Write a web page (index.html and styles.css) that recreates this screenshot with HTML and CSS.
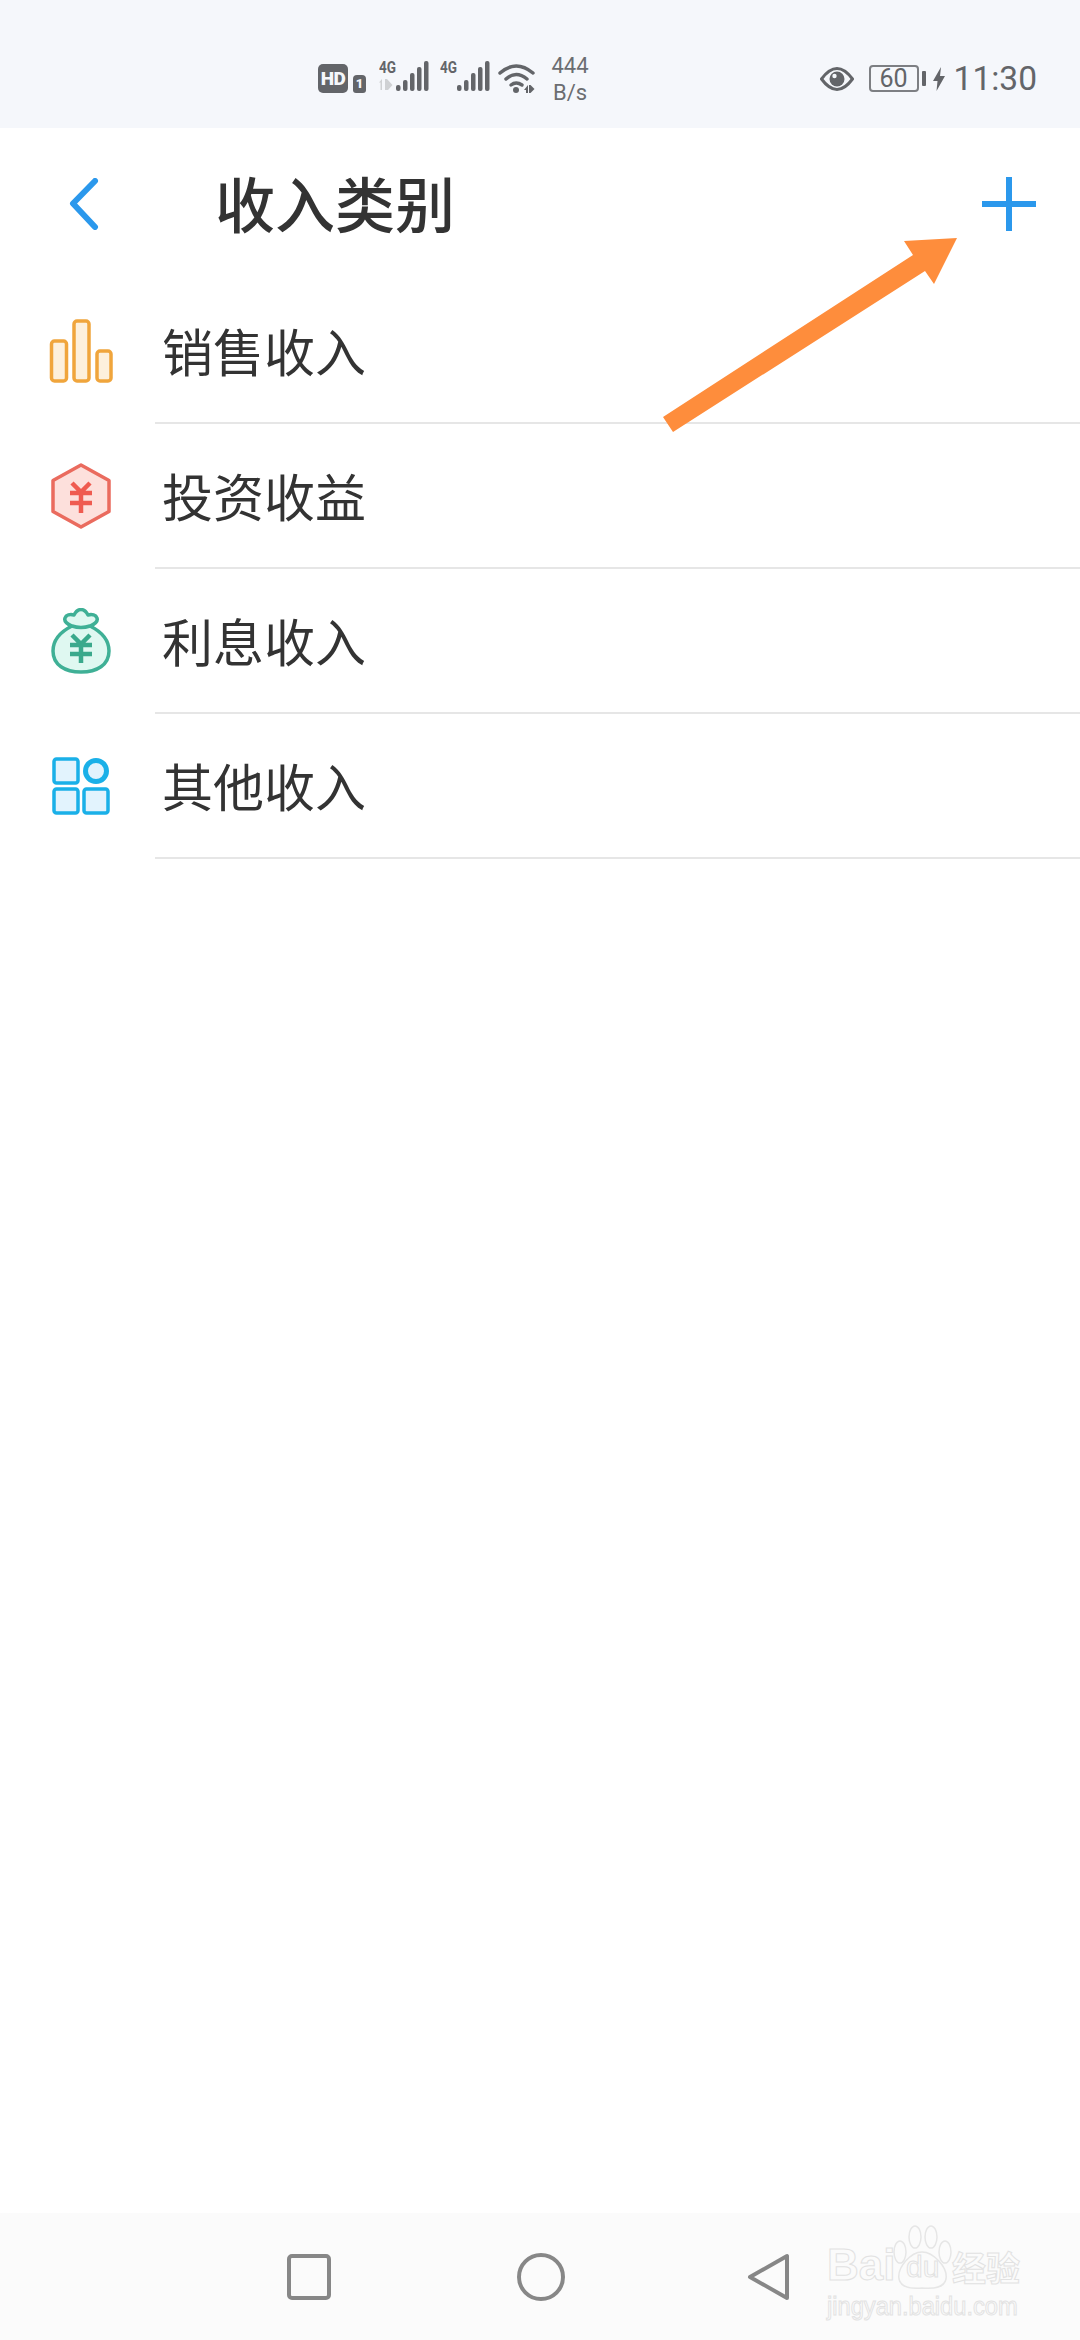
FILE: index.html
```html
<!DOCTYPE html>
<html lang="zh-CN">
<head>
<meta charset="utf-8">
<title>收入类别</title>
<link rel="stylesheet" href="styles.css">
</head>
<body>
<div class="page">
  <div class="statusbar">
    <div class="hd">HD</div>
    <div class="sim">1</div>
    <div class="signal sig1">
      <span class="g4">4G</span>
      <svg class="updown" width="14" height="11" viewBox="0 0 14 11"><path d="M0 3.500L3 0V11H1.500V3.500ZM6 11V0H8V4L8 0 13.500 6 9 11H7.500V11Z" fill="#cfd1d4"/></svg>
      <svg width="33" height="34" viewBox="0 0 33 34"><g fill="#636569"><rect x="0" y="25" width="4.500" height="6" rx="2"/><rect x="7" y="20" width="4.500" height="11" rx="2"/><rect x="14" y="13" width="4.500" height="18" rx="2"/><rect x="21" y="7" width="4.500" height="24" rx="2"/><rect x="28" y="1" width="4.500" height="30" rx="2"/></g></svg>
    </div>
    <div class="signal sig2">
      <span class="g4">4G</span>
      <svg width="33" height="34" viewBox="0 0 33 34"><g fill="#636569"><rect x="0" y="25" width="4.500" height="6" rx="2"/><rect x="7" y="20" width="4.500" height="11" rx="2"/><rect x="14" y="13" width="4.500" height="18" rx="2"/><rect x="21" y="7" width="4.500" height="24" rx="2"/><rect x="28" y="1" width="4.500" height="30" rx="2"/></g></svg>
    </div>
    <svg class="wifi" width="38" height="32" viewBox="0 0 38 32"><g fill="none" stroke="#636569" stroke-width="3.500" stroke-linecap="round"><path d="M2 11Q18-3 35 11"/><path d="M8 17Q18 8 29 17"/><path d="M13 23Q18 19 24 23"/></g><circle cx="18" cy="28" r="3" fill="#636569"/><path d="M28 31h2V23l-4 5h2zM31 23h1.500l4 4-4 4H31z" fill="#636569"/></svg>
    <div class="speed"><span>444</span><span>B/s</span></div>
    <div class="status-right">
      <svg width="34" height="28" viewBox="0 0 34 28"><path d="M1.500 14Q17-7 32.500 14Q17 35 1.500 14Z" fill="none" stroke="#636569" stroke-width="3"/><circle cx="17" cy="14" r="7.500" fill="#636569"/><circle cx="14.500" cy="11" r="2.200" fill="#f5f7fb"/></svg>
      <div class="battery">60</div>
      <div class="nub"></div>
      <svg class="bolt" width="12" height="24" viewBox="0 0 12 24"><path d="M8 0L0 14h4.500L3.500 24 12 9H7z" fill="#636569"/></svg>
      <div class="clock">11:30</div>
    </div>
  </div>

  <header class="header">
    <svg class="back" width="30" height="52" viewBox="0 0 30 52"><path d="M26 3L4 25.500 26 49" fill="none" stroke="#2b98ec" stroke-width="6" stroke-linecap="round" stroke-linejoin="round"/></svg>
    <h1 class="title">收入类别</h1>
    <svg class="plus" width="54" height="54" viewBox="0 0 54 54"><path d="M27 0V54M0 27H54" stroke="#2b98ec" stroke-width="6" stroke-linejoin="round"/></svg>
  </header>

  <main class="list">
    <div class="row">
      <div class="icon-cell">
        <svg width="64" height="64" viewBox="0 0 64 64"><g fill="#fdf0dc" stroke="#f0a53c" stroke-width="3.500"><rect x="2.500" y="22" width="15" height="40" rx="3"/><rect x="25" y="2" width="15" height="60" rx="3"/><rect x="48" y="32" width="14" height="30" rx="3"/></g></svg>
      </div>
      <div class="label">销售收入</div>
    </div>
    <div class="row">
      <div class="icon-cell">
        <svg width="60" height="66" viewBox="0 0 60 66"><path d="M30 2L58 17.500V48.500L30 64 2 48.500V17.500Z" fill="#fde0dc" stroke="#ea6b5e" stroke-width="3.500" stroke-linejoin="round"/><path d="M21 20L30 29 39 20M19 30H41M19 40H41M30 29V50" fill="none" stroke="#ef5b50" stroke-width="4.500"/></svg>
      </div>
      <div class="label">投资收益</div>
    </div>
    <div class="row">
      <div class="icon-cell">
        <svg width="60" height="66" viewBox="0 0 60 66"><path d="M21 18C9 24 2 33 2 43C2 57 14 64 30 64C46 64 58 57 58 43C58 33 51 24 39 18C44 16 47 13 46 10C45 7 41 6 37 7C35 3 33 1.500 30 1.500C27 1.500 25 3 23 7C19 6 15 7 14 10C13 13 16 16 21 18Z" fill="#dff8f1" stroke="#3fb096" stroke-width="3.500" stroke-linejoin="round"/><path d="M21 18Q30 21 39 18" fill="none" stroke="#3fb096" stroke-width="3.500"/><path d="M21 27L30 36 39 27M19 37H41M19 46H41M30 36V55" fill="none" stroke="#3aa98c" stroke-width="4.500"/></svg>
      </div>
      <div class="label">利息收入</div>
    </div>
    <div class="row">
      <div class="icon-cell">
        <svg width="58" height="58" viewBox="0 0 58 58"><g fill="#e2f3fd" stroke="#1ab0e8" stroke-width="3.500"><rect x="2" y="2" width="24" height="24" rx="2.500"/><circle cx="44" cy="14" r="10.500" stroke-width="5"/><rect x="2" y="32" width="24" height="24" rx="2.500"/><rect x="32" y="32" width="24" height="24" rx="2.500"/></g></svg>
      </div>
      <div class="label">其他收入</div>
    </div>
  </main>

  <nav class="navbar">
    <svg width="44" height="46" viewBox="0 0 44 46"><rect x="2" y="2" width="40" height="42" rx="3" fill="none" stroke="#878787" stroke-width="4"/></svg>
    <svg width="48" height="48" viewBox="0 0 48 48"><circle cx="24" cy="24" r="22" fill="none" stroke="#878787" stroke-width="4"/></svg>
    <svg class="nav-back" width="44" height="48" viewBox="0 0 44 48"><path d="M40 3V45L3 24Z" fill="none" stroke="#878787" stroke-width="4" stroke-linejoin="round"/></svg>
  </nav>

  <svg class="arrow" width="300" height="200" viewBox="0 0 300 200"><path d="M2 179L252 17 243 3 296 0 273 46 264 33 12 194Z" fill="#fe8d3c"/></svg>

  <div class="watermark">
    <div class="wm-top">
      <span>Bai</span>
      <svg class="paw" width="60" height="66" viewBox="0 0 60 66"><g fill="none" stroke="#e6e6e6" stroke-width="1.500"><ellipse cx="8" cy="27" rx="6" ry="11"/><ellipse cx="23" cy="12" rx="6" ry="11"/><ellipse cx="39" cy="12" rx="6" ry="11"/><ellipse cx="53" cy="27" rx="6" ry="11"/><path d="M30 27C19 27 5 42 7 54C9 63 19 64 30 63C42 64 52 63 54 54C56 42 41 27 30 27Z"/></g></svg>
      <span class="wm-du">du</span>
      <span class="wm-cn">经验</span>
    </div>
    <div class="wm-url">jingyan.baidu.com</div>
  </div>
</div>
</body>
</html>
```

FILE: styles.css
```css
* { box-sizing: border-box; }
html, body { margin: 0; padding: 0; }
body {
  width: 1080px;
  height: 2340px;
  background: #fff;
  font-family: "Noto Sans CJK SC", "Noto Sans", sans-serif;
  color: #333;
  overflow: hidden;
}
.page {
  position: relative;
  width: 1080px;
  height: 2340px;
  display: flex;
  flex-direction: column;
}

/* Status bar */
.statusbar {
  height: 128px;
  flex: none;
  background: #f5f7fb;
  display: flex;
  align-items: center;
  padding: 29px 43px 0 318px;
  color: #636569;
  font-family: Roboto, sans-serif;
}
.hd {
  width: 30px;
  height: 29px;
  margin-top: -1px;
  border-radius: 5px;
  background: #636569;
  color: #f5f7fb;
  font-size: 19px;
  font-weight: 900;
  line-height: 29px;
  text-align: center;
  letter-spacing: -0.5px;
}
.sim {
  width: 13px;
  height: 18px;
  margin: 10px 0 0 5px;
  border-radius: 4px 4px 3px 3px;
  background: #636569;
  color: #f5f7fb;
  font-size: 13px;
  font-weight: 900;
  line-height: 18px;
  text-align: center;
}
.signal {
  position: relative;
  display: flex;
  align-items: flex-end;
  height: 34px;
  margin-top: -3px;
}
.signal svg:last-child { flex: none; }
.sig1 { margin-left: 13px; padding-left: 17px; width: 50px; }
.sig2 { margin-left: 11px; padding-left: 17px; width: 50px; }
.g4 {
  position: absolute;
  left: 0;
  top: 0;
  font-size: 17px;
  line-height: 14px;
  font-weight: 700;
  letter-spacing: 0;
  transform: scaleX(0.8);
  transform-origin: left top;
}
.updown { position: absolute; left: 0; top: 19px; }
.wifi { margin: -1px 0 0 8px; flex: none; }
.speed {
  display: flex;
  flex-direction: column;
  align-items: center;
  width: 40px;
  margin: 1px 0 0 14px;
  font-size: 22px;
  line-height: 27px;
  color: #6b6d71;
}
.status-right {
  margin-left: auto;
  display: flex;
  align-items: center;
}
.battery {
  width: 50px;
  height: 27px;
  margin-left: 15px;
  border: 2px solid #7d7f83;
  border-radius: 4px;
  font-size: 25px;
  line-height: 23px;
  text-align: center;
}
.nub {
  width: 4px;
  height: 15px;
  margin-left: 3px;
  border-radius: 1px;
  background: #636569;
}
.bolt { margin-left: 7px; }
.clock {
  margin-left: 9px;
  font-size: 33.500px;
  line-height: 40px;
  letter-spacing: 0;
}

/* Header */
.header {
  height: 151px;
  flex: none;
  display: flex;
  align-items: center;
  padding: 0 44px 0 69px;
}
.back { flex: none; }
.title {
  margin: -3px 0 0 116px;
  font-size: 60px;
  line-height: 80px;
  font-weight: 500;
  color: #333;
}
.plus { margin: 0 0 0 auto; flex: none; }

/* List */
.list { display: flex; flex-direction: column; }
.row {
  height: 145px;
  display: flex;
}
.icon-cell {
  width: 155px;
  flex: none;
  display: flex;
  align-items: center;
  justify-content: center;
  padding: 0 0 2px 7px;
}
.label {
  flex: 1;
  padding: 0 0 2px 7px;
  border-bottom: 2px solid #e6e6e6;
  font-size: 51px;
  display: flex;
  align-items: center;
  color: #333;
}

/* Nav bar */
.navbar {
  margin-top: auto;
  height: 127px;
  flex: none;
  background: #fbfbfb;
  display: flex;
  align-items: center;
  gap: 186px;
  padding: 0 0 0 287px;
}
.nav-back { margin-left: -4px; }

/* Annotation arrow */
.arrow { position: absolute; left: 661px; top: 238px; }

/* Watermark */
.watermark {
  position: absolute;
  left: 827px;
  top: 2225px;
  width: 196px;
  color: transparent;
  -webkit-text-stroke: 1px #e2e2e2;
  font-family: "Liberation Sans", sans-serif;
}
.wm-top {
  position: relative;
  height: 66px;
  display: flex;
  align-items: flex-end;
  font-size: 44px;
  line-height: 52px;
  font-weight: 700;
}
.paw { position: absolute; left: 65px; top: 0; }
.wm-du { position: absolute; left: 79px; bottom: 6px; font-size: 30px; line-height: 36px; font-weight: 400; }
.wm-cn {
  position: absolute;
  left: 125px;
  bottom: 2px;
  font-size: 34px;
  line-height: 44px;
  font-family: "Noto Sans CJK SC", sans-serif;
}
.wm-url {
  margin-top: 1px;
  font-size: 26px;
  line-height: 28px;
  white-space: nowrap;
  transform: scaleX(0.91);
  transform-origin: left center;
}
```
